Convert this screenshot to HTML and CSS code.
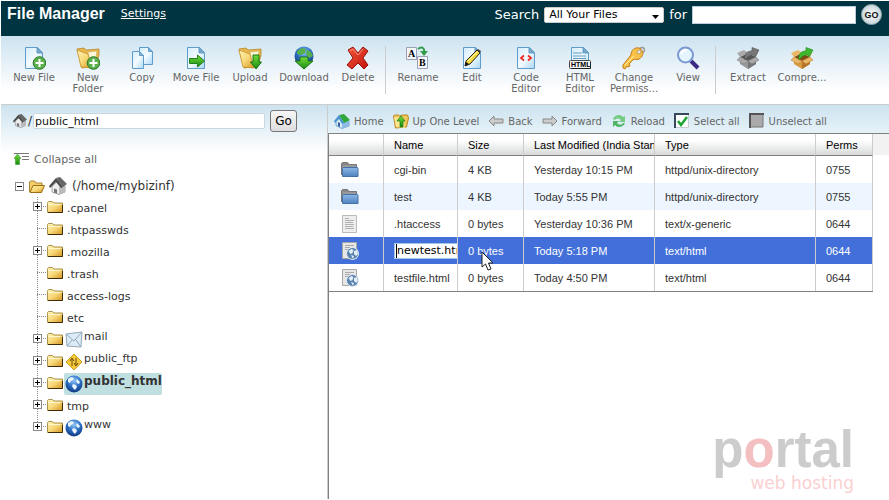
FILE: index.html
```html
<!DOCTYPE html>
<html lang="en">
<head>
    <meta charset="UTF-8">
    <meta name="viewport" content="width=device-width, initial-scale=1.0">
    <title>File Manager</title>
    <link rel="stylesheet" href="styles.css">
</head>
<body>

    <!-- Shared icons -->
    <svg class="icon-defs" width="0" height="0" aria-hidden="true">
        <defs>
            <linearGradient id="g-page" x1="0" y1="0" x2="1" y2="1">
                <stop offset="0" stop-color="#d3ecfb"/><stop offset=".5" stop-color="#f4fbff"/><stop offset="1" stop-color="#a9d8f5"/>
            </linearGradient>
            <linearGradient id="g-folder" x1="0" y1="0" x2="1" y2="1">
                <stop offset="0" stop-color="#fff3b8"/><stop offset=".5" stop-color="#f8d878"/><stop offset="1" stop-color="#d39320"/>
            </linearGradient>
            <linearGradient id="g-green" x1="0" y1="0" x2="0" y2="1">
                <stop offset="0" stop-color="#74dd3a"/><stop offset="1" stop-color="#178b12"/>
            </linearGradient>
            <linearGradient id="g-red" x1="0" y1="0" x2="1" y2="1">
                <stop offset="0" stop-color="#f3583c"/><stop offset="1" stop-color="#c4140c"/>
            </linearGradient>
            <linearGradient id="g-blue" x1="0" y1="0" x2="0" y2="1">
                <stop offset="0" stop-color="#8db9e8"/><stop offset="1" stop-color="#4f82bf"/>
            </linearGradient>
            <radialGradient id="g-globe" cx=".5" cy=".3" r=".75">
                <stop offset="0" stop-color="#8fc4f5"/><stop offset=".5" stop-color="#2c6fc4"/><stop offset="1" stop-color="#0b2e73"/>
            </radialGradient>
            <symbol id="i-page" viewBox="0 0 24 24">
                <path d="M3.500 1.500h12l5 5v16h-17z" fill="url(#g-page)" stroke="#5f9ccb"/>
                <path d="M15 1.500v5.500h5.500z" fill="#7fa6bf" stroke="#5f9ccb"/>
            </symbol>
            <symbol id="i-files" viewBox="0 0 24 24">
                <path d="M1 3l7-1 2 2 13-1v6l-3 11-14 2z" fill="#e6b950" stroke="#b98524" stroke-width=".8"/>
                <path d="M12 6l9-1-2 14-6 1z" fill="#fdf5d8" stroke="#cda64d" stroke-width=".6"/>
                <path d="M1 4l11 4 4 14-11-1z" fill="url(#g-folder)" stroke="#c8932b" stroke-width=".8"/>
            </symbol>
            <symbol id="i-plus" viewBox="0 0 24 24">
                <circle cx="17.500" cy="17" r="6.300" fill="#5bb04b" stroke="#2c7a2a"/>
                <path d="M17.500 13v8M13.500 17h8" stroke="#fff" stroke-width="2"/>
            </symbol>
            <symbol id="i-folder" viewBox="0 0 16 12">
                <path d="M.500 2.500v-1l1-1h4l1.500 1.500h8.500v9.500h-15z" fill="url(#g-folder)" stroke="#a9924f"/>
                <path d="M1 11.500h14.500V4" fill="none" stroke="#3e2b08"/>
                <path d="M1.500 3.500h12" stroke="#fff6cf"/>
            </symbol>
            <symbol id="i-house" viewBox="0 0 18 18">
                <path d="M3 9l6-5 7 5v6l-6 2.500-7-2.500z" fill="#eee" stroke="#8b8b8b" stroke-width=".8"/>
                <path d="M10 10l6-2v7l-6 2.500z" fill="#bbb"/>
                <path d="M7 1l4-1 7 7-4 3z" fill="#666"/>
                <path d="M0 9L7 1l7 9-2 1-5-6-6 6z" fill="#4a4a4a"/>
                <path d="M5 11.500l3 1v4l-3-1z" fill="#777"/>
            </symbol>
            <symbol id="i-globe" viewBox="0 0 18 18">
                <circle cx="9" cy="9" r="8.500" fill="url(#g-globe)"/>
                <path d="M3 4l3-2 3 1-1 2-2 1-1 2-2-1zM8 9l3 1 1 2-2 3-2-2-1-2zM12 4l3 3-1 2-2-1-1-2z" fill="#e9f4fb"/>
            </symbol>
            <symbol id="i-dir" viewBox="0 0 18 16">
                <path d="M.500 13V1.500l1-1h5L8 2.500h7.500V8" fill="#888" stroke="#777"/>
                <path d="M2 4h13" stroke="#aaa"/>
                <path d="M1.500 14.500V6.500l1-1h14l.5 1v8z" fill="url(#g-blue)" stroke="#4671a8"/>
            </symbol>
            <symbol id="i-doc" viewBox="0 0 18 18">
                <path d="M1.500.500h14v17h-14z" fill="#eee" stroke="#bbb"/>
                <path d="M4 3.500h4M4 5.500h9M4 7.500h8M4 9.500h9M4 11.500h8M4 13.500h9" stroke="#b0b0b0"/>
            </symbol>
            <symbol id="i-html" viewBox="0 0 18 18">
                <path d="M1.500.500h14v16h-14z" fill="#e6e6e6" stroke="#a8a8a8"/>
                <path d="M4 3.500h9M4 5.500h5M4 7.500h3" stroke="#aaa"/>
                <circle cx="11.500" cy="11.500" r="6" fill="#5b83b0" stroke="#e8eef4"/>
                <path d="M7.500 9l3-2 2 1-1 3-2 1zM13 9l3-1 1 4-2 2-2-2zM10 13l3 1-1 3z" fill="#e4eef6"/>
            </symbol>
            <symbol id="i-box" viewBox="0 0 24 24">
                <path d="M4 11l8 4 8-4v7l-8 5-8-5z" fill="var(--mid)"/>
                <path d="M12 15l8-4v7l-8 5z" fill="var(--dark)"/>
                <path d="M4 11l8-4 8 4-8 4z" fill="var(--deep)"/>
                <path d="M4 11l8-4-4-3-7 3zM20 11l-8-4 4-3 6 3z" fill="var(--light)"/>
                <path d="M4 11l8 4-4 3-7-4zM20 11l-8 4 4 3 7-4z" fill="var(--light)" stroke="var(--dark)" stroke-width=".5"/>
                <path d="M9 14c-1-6 2-9 7-9V1.500L23 4l-4 7-1-2c-4 0-6 1-9 5z" fill="var(--arrow)" stroke="var(--edge)" stroke-width=".6"/>
            </symbol>
        </defs>
    </svg>

    <header class="header">
        <h1 class="title">File Manager</h1>
        <a href="#" class="settings">Settings</a>
        <form class="search">
            <label for="search-in">Search</label>
            <span class="select-wrap">
                <select id="search-in" class="search-select">
                    <option>All Your Files</option>
                </select>
                <svg class="select-arrow" width="7" height="4" viewBox="0 0 7 4"><path d="M0 0h7L3.500 4z" fill="#000"/></svg>
            </span>
            <label for="search-text">for</label>
            <input type="text" id="search-text" class="search-text">
            <button type="button" class="search-go">GO</button>
        </form>
    </header>

    <nav class="toolbar">
        <button class="tool">
            <svg viewBox="0 0 24 24"><use href="#i-page"/><use href="#i-plus"/></svg>
            New File
        </button>
        <button class="tool">
            <svg viewBox="0 0 24 24"><use href="#i-files"/><use href="#i-plus"/></svg>
            New Folder
        </button>
        <button class="tool">
            <svg viewBox="0 0 24 24">
                <path d="M9.500 1.500h9l4 4v13h-13z" fill="url(#g-page)" stroke="#5f9ccb"/>
                <path d="M18.500 1.500v4h4z" fill="#8fb8d2" stroke="#5f9ccb"/>
                <path d="M2.500 5.500h7l4 4v13h-11z" fill="url(#g-page)" stroke="#5f9ccb"/>
                <path d="M9.500 5.500v4h4z" fill="#8fb8d2" stroke="#5f9ccb"/>
            </svg>
            Copy
        </button>
        <button class="tool">
            <svg viewBox="0 0 24 24"><use href="#i-page"/><path d="M5.500 12.500h8v-3.500l7 6-7 6v-3.500h-8z" fill="url(#g-green)" stroke="#22801a"/></svg>
            Move File
        </button>
        <button class="tool">
            <svg viewBox="0 0 24 24"><use href="#i-files"/><path d="M15 9h6v7h2.500L18 23l-5.500-7H15z" fill="url(#g-green)" stroke="#1c7217"/></svg>
            Upload
        </button>
        <button class="tool">
            <svg viewBox="0 0 24 24">
                <circle cx="12" cy="10" r="9.500" fill="url(#g-globe)"/>
                <path d="M5 5l5-3 4 1-1 4-4 2-4-1zM15 4l4 2 2 4-4 2-3-4z" fill="#55b04a"/>
                <path d="M8 11h8v4h5l-9 8-9-8h5z" fill="url(#g-green)" stroke="#1c7217"/>
            </svg>
            Download
        </button>
        <button class="tool">
            <svg viewBox="0 0 24 24"><path d="M2 4l5-3 5 6 5-6 5 4-5 7 5 7-4 4-6-6-6 6-5-4 6-7z" fill="url(#g-red)" stroke="#9a140e"/><path d="M4 5l3-2 5 6 5-6" fill="none" stroke="#f99080"/></svg>
            Delete
        </button>
        <div class="separator"></div>
        <button class="tool">
            <svg viewBox="0 0 24 24">
                <path d="M.500 1.500h10v12h-10zM11.500 10.500h10v12h-10z" fill="#f6f7fc" stroke="#9b9fb8"/>
                <text x="2" y="11" class="letter">A</text>
                <text x="13" y="20" class="letter">B</text>
                <path d="M12 3c4-3 7-1 6 4" fill="none" stroke="#2f9c48" stroke-width="2"/>
                <path d="M14 5h8l-4 5z" fill="#2f9c48"/>
            </svg>
            Rename
        </button>
        <button class="tool">
            <svg viewBox="0 0 24 24">
                <use href="#i-page"/>
                <path d="M5 20l1-5L17 4l3 3L10 18z" fill="#f7d83c" stroke="#222"/>
                <path d="M17 4l1-1 3 2-1 2z" fill="#444"/>
                <path d="M5 20l1-4 3 2z" fill="#111"/><path d="M8 15l9-9" stroke="#fff8c0"/>
            </svg>
            Edit
        </button>
        <button class="tool">
            <svg viewBox="0 0 24 24"><use href="#i-page"/><path d="M10 9.500L7 12l3 2.500M14 9.500l3 2.500-3 2.500" fill="none" stroke="#ee2b24" stroke-width="1.800"/></svg>
            Code Editor
        </button>
        <button class="tool">
            <svg viewBox="0 0 24 24">
                <use href="#i-page"/>
                <path d="M5 7h9M5 10h13M5 12.500h13" stroke="#5e9ac4"/>
                <rect x="1.500" y="14.500" width="21" height="8" rx="1" fill="#f4f4f4" stroke="#444"/>
                <path d="M3 22.500h19.500V16" fill="none" stroke="#222"/>
                <text x="3" y="21" class="tag">HTML</text>
            </svg>
            HTML Editor
        </button>
        <button class="tool">
            <svg viewBox="0 0 24 24">
                <circle cx="20" cy="4" r="2.500" fill="none" stroke="#999" stroke-width="1.300"/>
                <path d="M9 9c0-5 4-8 8-7 3 1 5 5 3 8-2 4-6 4-8 3l-5 5 1 2-2 1-1-1-2 3-2-1v-3z" fill="#f7c247" stroke="#c37a1b"/>
                <circle cx="17" cy="6" r="2" fill="#dceaf3" stroke="#a9731f" stroke-width=".6"/>
                <path d="M3 19l9-9" stroke="#fff0a8"/>
            </svg>
            Change Permiss...
        </button>
        <button class="tool">
            <svg viewBox="0 0 24 24">
                <path d="M15 15l7 7" stroke="#3a2a86" stroke-width="4"/>
                <circle cx="9.500" cy="9" r="7.500" fill="#e5f5ff" stroke="#7d99d2" stroke-width="2"/>
                <path d="M5 8c1-3 3-4 6-4" fill="none" stroke="#fff" stroke-width="2"/>
            </svg>
            View
        </button>
        <div class="separator"></div>
        <button class="tool">
            <svg class="box-gray" viewBox="0 0 24 24"><use href="#i-box"/></svg>
            Extract
        </button>
        <button class="tool">
            <svg class="box-brown" viewBox="0 0 24 24"><use href="#i-box"/></svg>
            Compre...
        </button>
    </nav>

    <main class="main">
        <aside class="sidebar">
            <form class="path-form">
                <label for="path" class="path-label">
                    <svg width="14" height="14"><use href="#i-house"/></svg>/
                </label>
                <input type="text" id="path" class="path-input" value="public_html">
                <button type="button" class="path-go">Go</button>
            </form>
            <button class="collapse">
                <svg width="16" height="12" viewBox="0 0 16 12">
                    <path d="M0 .500h15M8 3.500h7M8 6.500h7" stroke="#777"/>
                    <path d="M3.500 1L7 5.500H5.500v6h-4v-6H0z" fill="url(#g-green)" stroke="#24901c" stroke-width=".5"/>
                </svg>
                Collapse all
            </button>

            <div class="root">
                <button class="toggle" aria-label="Collapse home"></button>
                <svg class="root-folder" width="16" height="13" viewBox="0 0 16 13">
                    <path d="M.500 12V2l1-1h4l1.500 2h6v2.500" fill="#f3cf6b" stroke="#a88437"/>
                    <path d="M1 12.500L4 5.500h11.500l-3 7z" fill="url(#g-folder)" stroke="#9b6c12"/>
                </svg>
                <svg width="18" height="18"><use href="#i-house"/></svg>
                <a href="#" class="root-name">(/home/mybizinf)</a>
            </div>

            <ul class="tree">
                <li class="node">
                    <button class="toggle plus" aria-label="Expand .cpanel"></button>
                    <svg class="folder"><use href="#i-folder"/></svg>
                    <a href="#" class="name">.cpanel</a>
                </li>
                <li class="node">
                    <svg class="folder"><use href="#i-folder"/></svg>
                    <a href="#" class="name">.htpasswds</a>
                </li>
                <li class="node">
                    <button class="toggle plus" aria-label="Expand .mozilla"></button>
                    <svg class="folder"><use href="#i-folder"/></svg>
                    <a href="#" class="name">.mozilla</a>
                </li>
                <li class="node">
                    <svg class="folder"><use href="#i-folder"/></svg>
                    <a href="#" class="name">.trash</a>
                </li>
                <li class="node">
                    <svg class="folder"><use href="#i-folder"/></svg>
                    <a href="#" class="name">access-logs</a>
                </li>
                <li class="node">
                    <svg class="folder"><use href="#i-folder"/></svg>
                    <a href="#" class="name">etc</a>
                </li>
                <li class="node">
                    <button class="toggle plus" aria-label="Expand mail"></button>
                    <svg class="folder"><use href="#i-folder"/></svg>
                    <a href="#" class="name special">
                        <svg width="18" height="18" viewBox="0 0 18 18">
                            <path d="M1 3l16-2-1 15-14-1z" fill="#dcebf5" stroke="#91a9bb"/>
                            <path d="M1 3l8 7 8-9M2 15l5-6M16 16l-5-7" fill="none" stroke="#91a9bb"/>
                        </svg>
                        mail
                    </a>
                </li>
                <li class="node">
                    <button class="toggle plus" aria-label="Expand public_ftp"></button>
                    <svg class="folder"><use href="#i-folder"/></svg>
                    <a href="#" class="name special">
                        <svg width="18" height="18" viewBox="0 0 18 18">
                            <path d="M9 1l8 8-8 8-8-8z" fill="#f5cb3b" stroke="#cf9b22"/>
                            <path d="M7 13V6M5 8l2-3 2 3M11 5v7M9 10l2 3 2-3" fill="none" stroke="#6b4c10"/>
                        </svg>
                        public_ftp
                    </a>
                </li>
                <li class="node">
                    <button class="toggle plus" aria-label="Expand public_html"></button>
                    <svg class="folder"><use href="#i-folder"/></svg>
                    <a href="#" class="name special current"><svg width="18" height="18"><use href="#i-globe"/></svg>public_html</a>
                </li>
                <li class="node">
                    <button class="toggle plus" aria-label="Expand tmp"></button>
                    <svg class="folder"><use href="#i-folder"/></svg>
                    <a href="#" class="name">tmp</a>
                </li>
                <li class="node">
                    <button class="toggle plus" aria-label="Expand www"></button>
                    <svg class="folder"><use href="#i-folder"/></svg>
                    <a href="#" class="name special"><svg width="18" height="18"><use href="#i-globe"/></svg>www</a>
                </li>
            </ul>
        </aside>

        <section class="content">
            <div class="actions">
                <button class="action">
                    <svg viewBox="0 0 16 16">
                        <path d="M2 8l4-4 9 4v5l-7 2.500-6-3z" fill="#d9ecfa" stroke="#4a84b8" stroke-width=".7"/>
                        <path d="M8 9l7-2v6l-7 2.500z" fill="#8dbbe4"/>
                        <path d="M5 2l5-1 6 6-6 3z" fill="#2fa83a"/>
                        <path d="M0 8l5-6 5 8-2 1-3-5-4 4z" fill="#4a94cf"/>
                        <path d="M4 9l2 1v4l-2-1z" fill="#2f649c"/>
                    </svg>
                    Home
                </button>
                <button class="action">
                    <svg viewBox="0 0 16 16">
                        <path d="M.500 3l1-1h4l1 1 3-1h5l1 3-2 9-11 1z" fill="#f0c75a" stroke="#b98524"/>
                        <path d="M1 4l9 1 2 10-9-1z" fill="#fbe58f"/>
                        <path d="M8 3l4 5h-2v6H7V8H4z" fill="url(#g-green)" stroke="#1c7c17" stroke-width=".7"/>
                    </svg>
                    Up One Level
                </button>
                <button class="action">
                    <svg viewBox="0 0 16 16"><path d="M1 8l5-5v3h9v4H6v3z" fill="#ccc" stroke="#888"/></svg>
                    Back
                </button>
                <button class="action">
                    <svg viewBox="0 0 16 16"><path d="M15 8l-5-5v3H1v4h9v3z" fill="#ccc" stroke="#888"/></svg>
                    Forward
                </button>
                <button class="action">
                    <svg viewBox="0 0 16 16">
                        <path d="M2 6c2-5 8-5 10-2l2-1v6H8l2-2C8 5 5 5 4 7z" fill="#74ca82"/>
                        <path d="M14 10c-2 5-8 5-10 2l-2 2V8h6l-2 2c2 2 5 2 6 0z" fill="#50b666"/>
                    </svg>
                    Reload
                </button>
                <button class="action">
                    <svg viewBox="0 0 16 16">
                        <path d="M0 0h15v15H0z" fill="#fff"/>
                        <path d="M1 15V1h14" fill="none" stroke="#35495a" stroke-width="2"/>
                        <path d="M14.500 2v12.500H2" fill="none" stroke="#c6cdd2"/>
                        <path d="M4 8l3 4 6-8" fill="none" stroke="#1ba432" stroke-width="2.500"/>
                    </svg>
                    Select all
                </button>
                <button class="action">
                    <svg viewBox="0 0 16 16"><path d="M1 1h13v13H1z" fill="#aaa" stroke="#777"/><path d="M1 15V1h14" fill="none" stroke="#555" stroke-width="2"/></svg>
                    Unselect all
                </button>
            </div>

            <div class="list">
                <table class="files">
                    <colgroup>
                        <col class="col-icon"><col class="col-name"><col class="col-size"><col class="col-date"><col class="col-type"><col class="col-perms">
                    </colgroup>
                    <thead>
                        <tr><th></th><th>Name</th><th>Size</th><th>Last Modified (India Stand</th><th>Type</th><th>Perms</th></tr>
                    </thead>
                    <tbody>
                        <tr>
                            <td><svg class="file-icon"><use href="#i-dir"/></svg></td>
                            <td>cgi-bin</td><td>4 KB</td><td>Yesterday 10:15 PM</td><td>httpd/unix-directory</td><td>0755</td>
                        </tr>
                        <tr class="even">
                            <td><svg class="file-icon"><use href="#i-dir"/></svg></td>
                            <td>test</td><td>4 KB</td><td>Today 5:55 PM</td><td>httpd/unix-directory</td><td>0755</td>
                        </tr>
                        <tr>
                            <td><svg class="file-icon"><use href="#i-doc"/></svg></td>
                            <td>.htaccess</td><td>0 bytes</td><td>Yesterday 10:36 PM</td><td>text/x-generic</td><td>0644</td>
                        </tr>
                        <tr class="selected">
                            <td><svg class="file-icon"><use href="#i-html"/></svg></td>
                            <td><input type="text" class="rename" value="newtest.html" aria-label="File name"></td>
                            <td class="pointer-cell">0 bytes
                                <svg class="pointer" width="14" height="20" viewBox="0 0 14 20">
                                    <path d="M1 1v15l3.500-3 2.500 6 3-1-2.500-6H12z" fill="#fff" stroke="#222"/>
                                </svg>
                            </td>
                            <td>Today 5:18 PM</td><td>text/html</td><td>0644</td>
                        </tr>
                        <tr>
                            <td><svg class="file-icon"><use href="#i-html"/></svg></td>
                            <td>testfile.html</td><td>0 bytes</td><td>Today 4:50 PM</td><td>text/html</td><td>0644</td>
                        </tr>
                    </tbody>
                </table>
            </div>
        </section>
    </main>

    <div class="watermark">
        <div class="brand">p<span class="brand-o">o</span>rtal</div>
        <div class="tagline">web hosting</div>
    </div>

</body>
</html>
```
FILE: styles.css
```css
* {
    margin: 0;
    padding: 0;
    box-sizing: border-box;
}

body {
    position: relative;
    display: flex;
    flex-direction: column;
    min-height: 100vh;
    padding: 1px 0 1px 1px;
    font-family: Verdana, "DejaVu Sans", sans-serif;
    font-size: 11px;
    color: #333;
    background-color: #fff;
}

button {
    font-family: inherit;
    border: none;
    background: none;
    cursor: pointer;
}

a {
    color: inherit;
    text-decoration: none;
}

svg {
    display: block;
    flex: none;
}

.icon-defs {
    position: absolute;
}

/* Header */
.header {
    display: flex;
    align-items: flex-start;
    height: 35px;
    padding: 3px 7px 0 6px;
    background-color: #003440;
    color: #fff;
}

.title {
    font: bold 16px/20px "Liberation Sans", Arial, sans-serif;
}

.settings {
    margin-left: 16px;
    line-height: 20px;
    text-decoration: underline;
}

.search {
    display: flex;
    align-items: center;
    gap: 5px;
    margin-left: auto;
    font-size: 13px;
    line-height: 20px;
}

.select-wrap {
    position: relative;
}

.search-select {
    display: block;
    width: 120px;
    height: 16px;
    padding-left: 4px;
    appearance: none;
    border: 1px solid #ccc;
    border-radius: 2px;
    background-color: #fff;
    color: #000;
    font: 11px Verdana, "DejaVu Sans", sans-serif;
}

.select-arrow {
    position: absolute;
    right: 5px;
    top: 8px;
    pointer-events: none;
}

.search-text {
    width: 164px;
    height: 18px;
    border: 1px solid #bcd;
    background-color: #fff;
}

.search-go {
    width: 21px;
    height: 21px;
    border: 1px solid #9db3b8;
    border-radius: 50%;
    background: radial-gradient(#fff, #b5c6ca);
    color: #111;
    font: bold 9px "Liberation Sans", Arial, sans-serif;
}

/* Toolbar */
.toolbar {
    display: flex;
    align-items: flex-start;
    height: 69px;
    padding: 10px 6px 0;
    background: linear-gradient(#cde3f0, #fff 55px);
    border-bottom: 1px solid #ccc;
}

.tool {
    display: flex;
    flex-direction: column;
    align-items: center;
    gap: 2px;
    width: 54px;
    font-size: 10px;
    line-height: 11px;
    color: #666;
}

.tool svg {
    width: 24px;
    height: 24px;
}

.separator {
    width: 1px;
    height: 48px;
    margin-right: 5px;
    background-color: #ccc;
}

.letter {
    font: bold 10px "Liberation Serif", serif;
}

.tag {
    font: bold 7px "Liberation Sans", sans-serif;
}

.box-gray {
    --light: #aaa;
    --mid: #999;
    --dark: #777;
    --deep: #555;
    --arrow: #777;
    --edge: #555;
}

.box-brown {
    --light: #e9b765;
    --mid: #d99a41;
    --dark: #b5742a;
    --deep: #7d4c17;
    --arrow: #3cb92e;
    --edge: #22801a;
}

/* Folder tree */
.main {
    display: flex;
    flex: 1;
}

.sidebar {
    width: 327px;
    flex: none;
    padding: 5px 12px 0;
    background: linear-gradient(#cde3f0, #fff 48px);
    border-right: 1px solid #ccc;
}

.path-form {
    display: flex;
    align-items: center;
    font-size: 12px;
}

.path-label {
    display: flex;
    align-items: center;
    gap: 1px;
    margin-right: 1px;
}

.path-input {
    width: 232px;
    height: 16px;
    margin-right: 5px;
    padding-left: 1px;
    border: 1px solid #c8d8e0;
    border-radius: 2px;
    background-color: #fff;
    color: #111;
    font: 11px Verdana, "DejaVu Sans", sans-serif;
}

.path-go {
    width: 27px;
    height: 22px;
    border: 1px solid #777;
    border-radius: 3px;
    background: linear-gradient(#f6f6f6, #ddd);
    color: #000;
    font-size: 12px;
}

.collapse {
    display: flex;
    align-items: center;
    gap: 4px;
    height: 16px;
    margin: 19px 0 8px 1px;
    font-size: 11px;
    color: #666;
}

.root {
    display: flex;
    align-items: center;
    height: 22px;
    padding-left: 2px;
    font-size: 12px;
}

.root-folder {
    margin: 0 4px 0 5px;
}

.root-name {
    margin-left: 5px;
}

.toggle {
    width: 9px;
    height: 9px;
    flex: none;
    border: 1px solid #888;
    background: linear-gradient(#000, #000) center / 5px 1px no-repeat #fff;
}

.plus {
    background: linear-gradient(#000, #000) center / 5px 1px no-repeat, linear-gradient(#000, #000) center / 1px 5px no-repeat, #fff;
}

.tree {
    margin-left: 20px;
    list-style: none;
}

.node {
    display: flex;
    height: 22px;
    padding-top: 4px;
    background: repeating-linear-gradient(#888 0 1px, transparent 1px 2px) 4px 0 / 1px 100% no-repeat,
        repeating-linear-gradient(90deg, #888 0 1px, transparent 1px 2px) 4px 9px / 10px 1px no-repeat;
}

.node:last-child {
    background-size: 1px 9px, 10px 1px;
}

.node .toggle {
    margin: 1px -9px 0 0;
}

.folder {
    width: 16px;
    height: 12px;
    margin-left: 14px;
}

.name {
    display: flex;
    height: 22px;
    margin: -4px 0 0 1px;
    padding: 4px 0 0 3px;
    line-height: 16px;
}

.special {
    gap: 1px;
    padding: 0;
}

.special svg {
    margin: 2px 0 0 1px;
}

.current {
    border-radius: 2px;
    background-color: #c0dfe0;
    font-size: 12px;
    font-weight: bold;
}

/* File list */
.content {
    display: flex;
    flex: 1;
    flex-direction: column;
    min-width: 0;
}

.actions {
    display: flex;
    align-items: center;
    gap: 9px;
    height: 28px;
    padding: 4px 6px 0;
    background: linear-gradient(#cde3f0, #e6f2f8);
}

.action {
    display: flex;
    align-items: center;
    gap: 4px;
    font-size: 10px;
    color: #666;
    white-space: nowrap;
}

.action svg {
    width: 16px;
    height: 16px;
}

.list {
    flex: 1;
    border-top: 1px solid #808080;
    border-left: 1px solid #808080;
    background: linear-gradient(#f2f2f2, #f2f2f2) 0 0 / 100% 21px no-repeat;
}

.files {
    width: 544px;
    table-layout: fixed;
    border-collapse: separate;
    border-spacing: 0;
    border-bottom: 1px solid #808080;
    background-color: #fff;
    font: 11px "Liberation Sans", Arial, sans-serif;
}

.col-icon {
    width: 55px;
}

.col-name {
    width: 74px;
}

.col-size {
    width: 66px;
}

.col-date {
    width: 131px;
}

.col-type {
    width: 161px;
}

.col-perms {
    width: 57px;
}

.files th,
.files td {
    height: 27px;
    padding-left: 10px;
    border-right: 1px solid #ccc;
    overflow: hidden;
    text-align: left;
    white-space: nowrap;
}

.files th {
    height: 22px;
    border-bottom: 1px solid #808080;
    background: linear-gradient(#fff 30%, #d8dada);
    color: #000;
    font-weight: normal;
}

.file-icon {
    width: 18px;
    height: 18px;
    margin-left: 2px;
}

.even {
    background-color: #edf5ff;
}

.selected {
    background-color: #426fd9;
    color: #fff;
}

.rename {
    display: block;
    width: 90px;
    height: 16px;
    padding-left: 2px;
    border: 1px solid #9fc6ea;
    background: linear-gradient(#000, #000) 1px 0 / 1px 100% no-repeat #fff;
    color: #000;
    font: 11px Verdana, "DejaVu Sans", sans-serif;
}

.files .pointer-cell {
    position: relative;
    overflow: visible;
}

.pointer {
    position: absolute;
    left: 23px;
    top: 14px;
}

/* Watermark */
.watermark {
    position: absolute;
    right: 35px;
    bottom: 8px;
    text-align: right;
    font-family: "Liberation Sans", Arial, sans-serif;
}

.brand {
    font-size: 51px;
    font-weight: bold;
    line-height: 48px;
    color: #ccc;
}

.brand-o {
    color: #f3bfc0;
}

.tagline {
    font: 17px/18px "DejaVu Sans", sans-serif;
    color: #fad0d1;
}
```
